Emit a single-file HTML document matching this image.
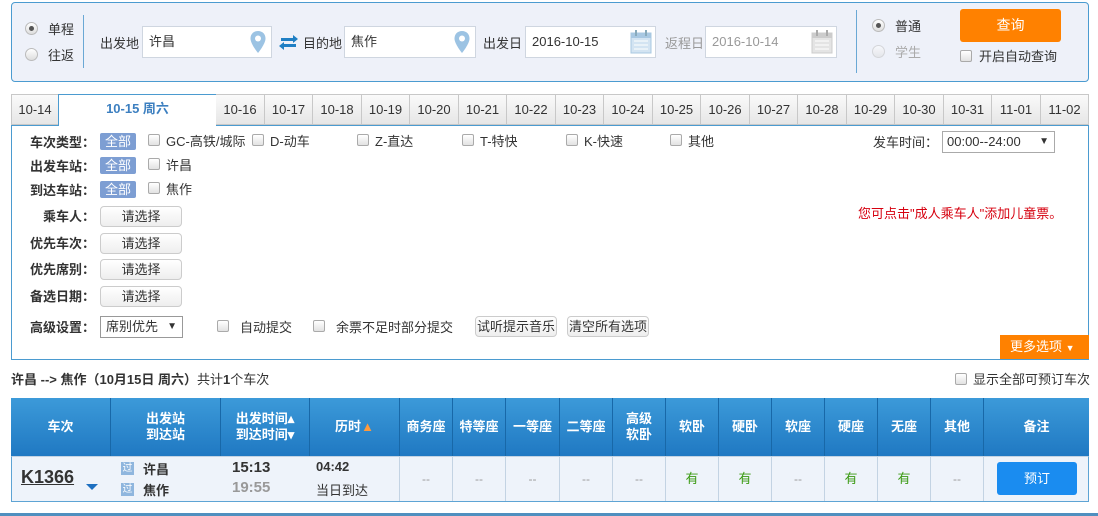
<!DOCTYPE html>
<html><head><meta charset="utf-8"><style>
*{box-sizing:border-box;margin:0;padding:0}
body{width:1098px;height:516px;background:#fff;font-family:"Liberation Sans","Noto Sans CJK SC",sans-serif;font-size:13px;color:#333;position:relative;overflow:hidden}
.a{position:absolute;white-space:nowrap}
.radio{position:absolute;width:13px;height:13px;border-radius:50%;border:1px solid #bbb;background:linear-gradient(#fff,#ddd)}
.radio.on::after{content:"";position:absolute;left:3px;top:3px;width:5px;height:5px;border-radius:50%;background:#555}
.cb{position:absolute;width:12px;height:12px;border:1px solid #aaa;border-radius:2px;background:linear-gradient(#fff,#e2e2e2)}
.inp{position:absolute;background:#fff;border:1px solid #cfd6e0;height:32px;line-height:30px;padding-left:6px;font-size:13px}
.tab{position:absolute;top:94px;height:31px;border:1px solid #c8c8c8;border-left:none;background:linear-gradient(#fafafa,#e6e6e6);text-align:center;line-height:30px;font-size:13px;color:#333}
.lab{position:absolute;width:90px;left:5px;text-align:right;font-weight:bold;color:#333;font-size:13px}
.all{position:absolute;left:100px;width:36px;height:17px;background:#7d9ed3;color:#fff;text-align:center;line-height:17px;font-size:13px;border-radius:2px}
.btn{position:absolute;left:100px;width:82px;height:21px;border:1px solid #ccc;border-radius:4px;background:linear-gradient(#fff,#eee);text-align:center;line-height:19px;font-size:13px}
.th{position:absolute;top:398px;height:58px;color:#fff;font-weight:bold;font-size:13px;text-align:center;display:flex;align-items:center;justify-content:center;line-height:16px;border-right:1px solid #1868a8}
.td{position:absolute;top:457px;height:44px;border-right:1px solid #c3d3e3;text-align:center;line-height:44px;color:#999;font-size:12px}
.y{color:#3a9a12;font-size:13px}
</style></head><body>
<div class="a" style="left:11px;top:2px;width:1078px;height:80px;background:#eef1f9;border:1px solid #4b9bd0;border-radius:4px"></div>
<div class="radio on" style="left:25px;top:22px"></div><div class="a" style="left:48px;top:19px">单程</div>
<div class="radio" style="left:25px;top:48px"></div><div class="a" style="left:48px;top:45px">往返</div>
<div class="a" style="left:83px;top:15px;width:1px;height:53px;background:#6aa8d5"></div>
<div class="a" style="left:100px;top:33px">出发地</div>
<div class="inp" style="left:142px;top:26px;width:130px">许昌</div>
<svg class="a" style="left:249px;top:30px" width="18" height="24" viewBox="0 0 18 24"><path d="M9 1C4.5 1 1.5 4.3 1.5 8.5 1.5 14 9 23 9 23s7.5-9 7.5-14.5C16.5 4.3 13.5 1 9 1z" fill="#9cc3e3"/><circle cx="9" cy="8.5" r="3" fill="#fff"/></svg>
<svg class="a" style="left:279px;top:35px" width="19" height="15" viewBox="0 0 19 15"><path d="M2 6V3h12V0l5 4-5 4V6H4z M17 9v3H5v3l-5-4 5-4v2h10z" fill="#1f7fc4"/></svg>
<div class="a" style="left:303px;top:33px">目的地</div>
<div class="inp" style="left:344px;top:26px;width:132px">焦作</div>
<svg class="a" style="left:453px;top:30px" width="18" height="24" viewBox="0 0 18 24"><path d="M9 1C4.5 1 1.5 4.3 1.5 8.5 1.5 14 9 23 9 23s7.5-9 7.5-14.5C16.5 4.3 13.5 1 9 1z" fill="#9cc3e3"/><circle cx="9" cy="8.5" r="3" fill="#fff"/></svg>
<div class="a" style="left:483px;top:33px">出发日</div>
<div class="inp" style="left:525px;top:26px;width:131px">2016-10-15</div>
<svg class="a" style="left:630px;top:30px" width="22" height="24" viewBox="0 0 22 24"><rect x="1" y="3" width="20" height="20" fill="#d3e4f2" stroke="#a8c8e2"/><rect x="1" y="3" width="20" height="5" fill="#a8c8e2"/><rect x="5" y="0" width="2" height="6" fill="#8ab"/><rect x="15" y="0" width="2" height="6" fill="#8ab"/><path d="M4 11h14M4 15h14M4 19h14" stroke="#fff"/></svg>
<div class="a" style="left:665px;top:33px;color:#999">返程日</div>
<div class="inp" style="left:705px;top:26px;width:132px;color:#999">2016-10-14</div>
<svg class="a" style="left:811px;top:30px" width="22" height="24" viewBox="0 0 22 24"><rect x="1" y="3" width="20" height="20" fill="#e4e4e4" stroke="#ccc"/><rect x="1" y="3" width="20" height="5" fill="#ccc"/><rect x="5" y="0" width="2" height="6" fill="#aaa"/><rect x="15" y="0" width="2" height="6" fill="#aaa"/><path d="M4 11h14M4 15h14M4 19h14" stroke="#fff"/></svg>
<div class="a" style="left:856px;top:10px;width:1px;height:63px;background:#6aa8d5"></div>
<div class="radio on" style="left:872px;top:19px"></div><div class="a" style="left:895px;top:16px">普通</div>
<div class="radio" style="left:872px;top:45px;opacity:.5"></div><div class="a" style="left:895px;top:42px;color:#aaa">学生</div>
<div class="a" style="left:960px;top:9px;width:101px;height:33px;background:#ff8100;border-radius:3px;color:#fff;text-align:center;line-height:33px;font-size:14px">查询</div>
<div class="cb" style="left:960px;top:50px"></div><div class="a" style="left:979px;top:46px">开启自动查询</div>
<div class="tab" style="left:11px;width:48px;border-left:1px solid #c8c8c8">10-14</div>
<div class="a" style="left:58px;top:94px;width:159px;height:32px;background:#fff;border:1px solid #4b9bd0;border-bottom:none;text-align:center;line-height:28px;color:#3c7fc0;font-weight:bold;font-size:13px">10-15 周六</div>
<div class="tab" style="left:216px;width:49px">10-16</div>
<div class="tab" style="left:265px;width:48px">10-17</div>
<div class="tab" style="left:313px;width:49px">10-18</div>
<div class="tab" style="left:362px;width:48px">10-19</div>
<div class="tab" style="left:410px;width:49px">10-20</div>
<div class="tab" style="left:459px;width:48px">10-21</div>
<div class="tab" style="left:507px;width:49px">10-22</div>
<div class="tab" style="left:556px;width:48px">10-23</div>
<div class="tab" style="left:604px;width:49px">10-24</div>
<div class="tab" style="left:653px;width:48px">10-25</div>
<div class="tab" style="left:701px;width:49px">10-26</div>
<div class="tab" style="left:750px;width:48px">10-27</div>
<div class="tab" style="left:798px;width:49px">10-28</div>
<div class="tab" style="left:847px;width:48px">10-29</div>
<div class="tab" style="left:895px;width:49px">10-30</div>
<div class="tab" style="left:944px;width:48px">10-31</div>
<div class="tab" style="left:992px;width:49px">11-01</div>
<div class="tab" style="left:1041px;width:48px">11-02</div>
<div class="a" style="left:11px;top:125px;width:1078px;height:235px;border:1px solid #4b9bd0;border-top:none"></div>
<div class="a" style="left:216px;top:125px;width:873px;height:1px;background:#4b9bd0"></div>
<div class="a" style="left:11px;top:125px;width:47px;height:1px;background:#4b9bd0"></div>
<div class="lab" style="top:132px">车次类型：</div><div class="all" style="top:133px">全部</div>
<div class="cb" style="left:148px;top:134px"></div><div class="a" style="left:166px;top:131px">GC-高铁/城际</div>
<div class="cb" style="left:252px;top:134px"></div><div class="a" style="left:270px;top:131px">D-动车</div>
<div class="cb" style="left:357px;top:134px"></div><div class="a" style="left:375px;top:131px">Z-直达</div>
<div class="cb" style="left:462px;top:134px"></div><div class="a" style="left:480px;top:131px">T-特快</div>
<div class="cb" style="left:566px;top:134px"></div><div class="a" style="left:584px;top:131px">K-快速</div>
<div class="cb" style="left:670px;top:134px"></div><div class="a" style="left:688px;top:131px">其他</div>
<div class="a" style="left:873px;top:132px">发车时间：</div>
<div class="a" style="left:942px;top:131px;width:113px;height:22px;border:1px solid #aaa;background:#fff;padding-left:4px;line-height:20px;font-size:13px">00:00--24:00<span style="position:absolute;right:5px;font-size:10px">▼</span></div>
<div class="lab" style="top:156px">出发车站：</div><div class="all" style="top:157px">全部</div>
<div class="cb" style="left:148px;top:158px"></div><div class="a" style="left:166px;top:155px">许昌</div>
<div class="lab" style="top:180px">到达车站：</div><div class="all" style="top:181px">全部</div>
<div class="cb" style="left:148px;top:182px"></div><div class="a" style="left:166px;top:179px">焦作</div>
<div class="lab" style="top:206px">乘车人：</div><div class="btn" style="top:206px">请选择</div>
<div class="lab" style="top:233px">优先车次：</div><div class="btn" style="top:233px">请选择</div>
<div class="lab" style="top:259px">优先席别：</div><div class="btn" style="top:259px">请选择</div>
<div class="lab" style="top:286px">备选日期：</div><div class="btn" style="top:286px">请选择</div>
<div class="a" style="left:858px;top:203px;color:#d6000f">您可点击"成人乘车人"添加儿童票。</div>
<div class="lab" style="top:317px">高级设置：</div>
<div class="a" style="left:100px;top:316px;width:83px;height:22px;border:1px solid #999;background:#fff;padding-left:5px;line-height:20px">席别优先<span style="position:absolute;right:5px;font-size:10px">▼</span></div>
<div class="cb" style="left:217px;top:320px"></div><div class="a" style="left:240px;top:317px">自动提交</div>
<div class="cb" style="left:313px;top:320px"></div><div class="a" style="left:336px;top:317px">余票不足时部分提交</div>
<div class="btn" style="left:475px;top:316px;width:82px">试听提示音乐</div>
<div class="btn" style="left:567px;top:316px;width:82px">清空所有选项</div>
<div class="a" style="left:1000px;top:335px;width:89px;height:24px;background:#ff8100;color:#fff;line-height:24px;padding-left:10px;font-size:13px">更多选项 <span style="font-size:9px">▼</span></div>
<div class="a" style="left:11px;top:369px;font-weight:bold">许昌 --&gt; 焦作（10月15日 周六）<span style="font-weight:normal">共计</span>1<span style="font-weight:normal">个车次</span></div>
<div class="cb" style="left:955px;top:373px"></div><div class="a" style="left:973px;top:369px">显示全部可预订车次</div>
<div class="a" style="left:11px;top:398px;width:1078px;height:59px;background:linear-gradient(#3c9ad9,#1f78c2)"></div>
<div class="a" style="left:11px;top:456px;width:1078px;height:46px;background:#eef3fa;border:1px solid #5ea4d4;border-top:1px solid #c3d3e3"></div>
<div class="th" style="left:11px;width:100px">车次</div>
<div class="th" style="left:111px;width:110px">出发站<br>到达站</div>
<div class="th" style="left:221px;width:89px">出发时间▴<br>到达时间▾</div>
<div class="th" style="left:310px;width:90px">历时<span style="color:#ff9a3c">▲</span></div>
<div class="th" style="left:400px;width:53px">商务座</div>
<div class="th" style="left:453px;width:53px">特等座</div>
<div class="th" style="left:506px;width:54px">一等座</div>
<div class="th" style="left:560px;width:53px">二等座</div>
<div class="th" style="left:613px;width:53px">高级<br>软卧</div>
<div class="th" style="left:666px;width:53px">软卧</div>
<div class="th" style="left:719px;width:53px">硬卧</div>
<div class="th" style="left:772px;width:53px">软座</div>
<div class="th" style="left:825px;width:53px">硬座</div>
<div class="th" style="left:878px;width:53px">无座</div>
<div class="th" style="left:931px;width:53px">其他</div>
<div class="th" style="left:984px;width:105px;border:none">备注</div>
<div class="a" style="left:21px;top:467px;font-size:18px;font-weight:bold;text-decoration:underline;color:#333">K1366</div>
<div class="a" style="left:86px;top:484px;width:0;height:0;border-left:6px solid transparent;border-right:6px solid transparent;border-top:6px solid #1d6fc0"></div>
<div class="a" style="left:121px;top:462px;width:13px;height:13px;background:#8fb6de;color:#fff;font-size:10px;line-height:13px;text-align:center">过</div>
<div class="a" style="left:143px;top:459px;font-weight:bold">许昌</div>
<div class="a" style="left:121px;top:483px;width:13px;height:13px;background:#8fb6de;color:#fff;font-size:10px;line-height:13px;text-align:center">过</div>
<div class="a" style="left:143px;top:480px;font-weight:bold">焦作</div>
<div class="a" style="left:232px;top:459px;font-size:15px;font-weight:bold;color:#333">15:13</div>
<div class="a" style="left:232px;top:479px;font-size:15px;font-weight:bold;color:#999">19:55</div>
<div class="a" style="left:316px;top:459px;font-weight:bold">04:42</div>
<div class="a" style="left:316px;top:480px">当日到达</div>
<div class="a" style="left:399px;top:457px;width:1px;height:44px;background:#c3d3e3"></div>
<div class="td" style="left:400px;width:53px">--</div>
<div class="td" style="left:453px;width:53px">--</div>
<div class="td" style="left:506px;width:54px">--</div>
<div class="td" style="left:560px;width:53px">--</div>
<div class="td" style="left:613px;width:53px">--</div>
<div class="td y" style="left:666px;width:53px">有</div>
<div class="td y" style="left:719px;width:53px">有</div>
<div class="td" style="left:772px;width:53px">--</div>
<div class="td y" style="left:825px;width:53px">有</div>
<div class="td y" style="left:878px;width:53px">有</div>
<div class="td" style="left:931px;width:53px">--</div>
<div class="a" style="left:997px;top:462px;width:80px;height:33px;background:#1a8cf0;border-radius:3px;color:#fff;text-align:center;line-height:33px">预订</div>
<div class="a" style="left:0;top:513px;width:1098px;height:3px;background:#4f8fbf"></div>
</body></html>
